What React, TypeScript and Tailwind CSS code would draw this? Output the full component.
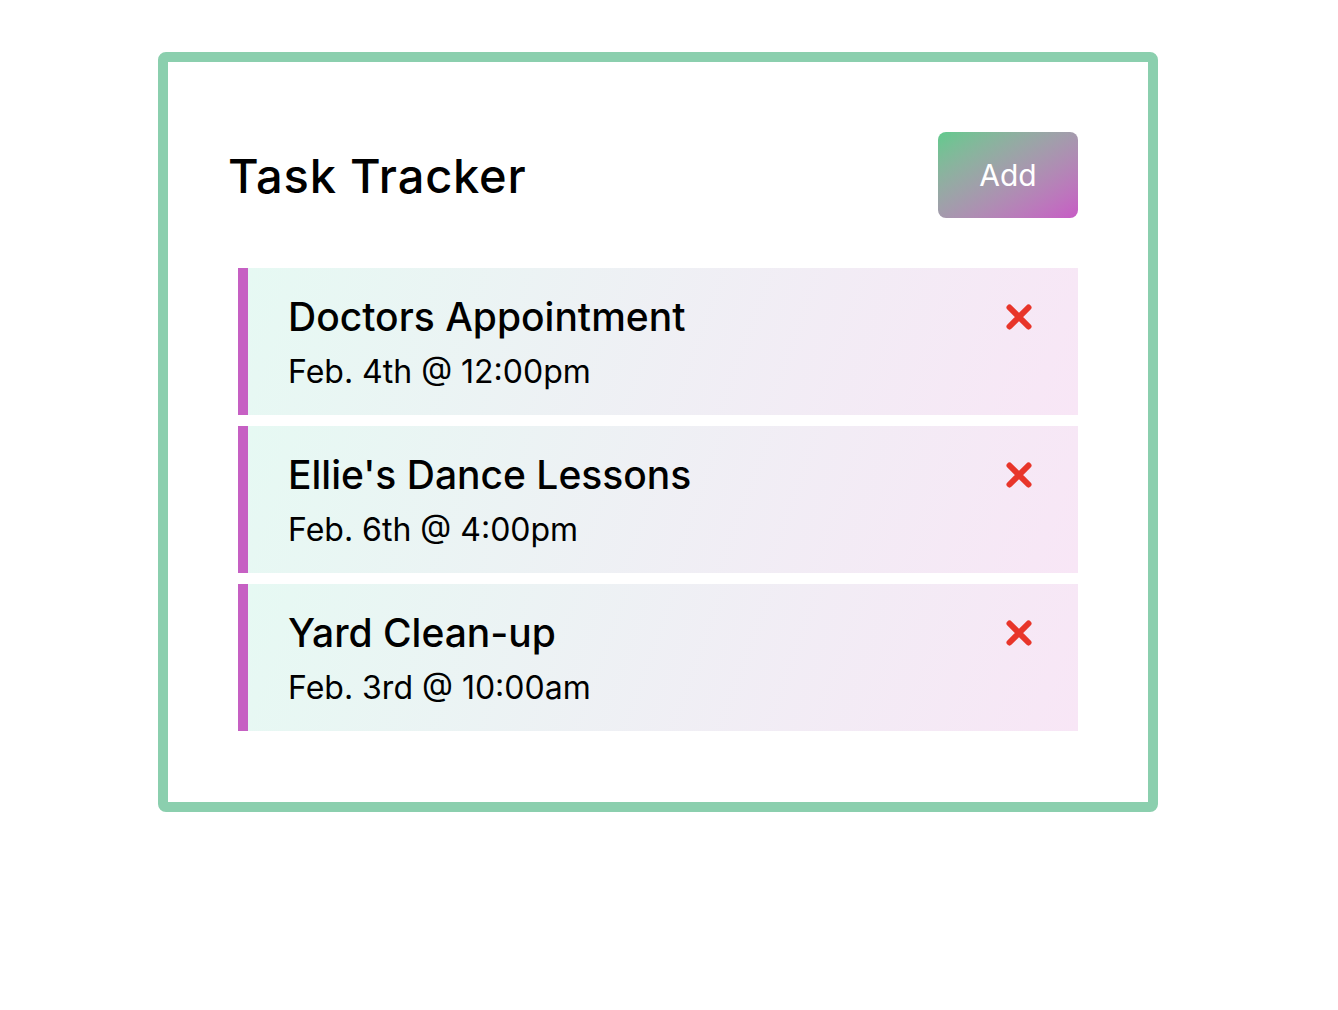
const tasks = [
  { id: 1, text: "Doctors Appointment", day: "Feb. 4th @ 12:00pm" },
  { id: 2, text: "Ellie's Dance Lessons", day: "Feb. 6th @ 4:00pm" },
  { id: 3, text: "Yard Clean-up", day: "Feb. 3rd @ 10:00am" },
]

function CloseIcon() {
  return (
    <svg width="30" height="30" viewBox="0 0 30 30" className="shrink-0">
      <path d="M5.5 5.5 L24.5 24.5 M24.5 5.5 L5.5 24.5" stroke="#e8352a" strokeWidth="6" strokeLinecap="round" />
    </svg>
  )
}

export default function App() {
  return (
    <div className="min-h-screen bg-white pt-[52px] pl-[158px] font-['Inter',sans-serif] text-black">
      <div className="w-[1000px] h-[760px] border-[10px] border-[#8bcfae] rounded-[8px] pt-[70px] pl-[60px] pr-[70px]">
        <header className="flex items-center justify-between mb-[50px]">
          <h1 className="text-[47px] leading-none font-medium tracking-[0.8px]">Task Tracker</h1>
          <button className="w-[140px] h-[86px] rounded-[8px] bg-gradient-to-br from-[#60ca8d] to-[#c75bc5] text-white text-[30px] font-normal">
            Add
          </button>
        </header>

        <div className="ml-[10px] flex flex-col gap-[11px]">
          {tasks.map((task) => (
            <div
              key={task.id}
              className="h-[147px] border-l-[10px] border-[#c660c3] bg-[linear-gradient(110deg,#e6f9f3,#f8e6f6)] pl-[40px] pr-[44px] pt-[25px] flex justify-between"
            >
              <div>
                <h3 className="text-[39px] leading-[48px] font-medium">{task.text}</h3>
                <p className="text-[32px] leading-[40px] mt-[11px]">{task.day}</p>
              </div>
              <div className="pt-[9px]">
                <CloseIcon />
              </div>
            </div>
          ))}
        </div>
      </div>
    </div>
  )
}
